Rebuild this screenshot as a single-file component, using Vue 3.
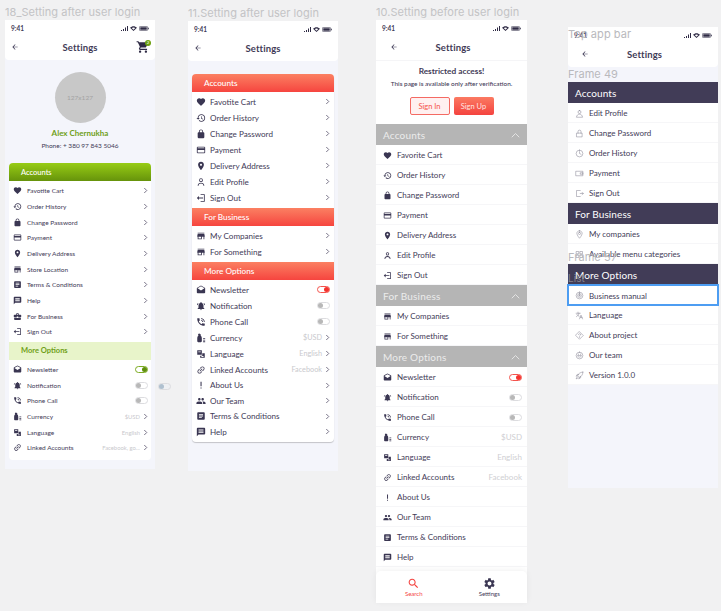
<script setup>
const icons = {
  heart: 'M12 21.35l-1.45-1.32C5.4 15.36 2 12.28 2 8.5 2 5.42 4.42 3 7.5 3c1.74 0 3.41.81 4.5 2.09C13.09 3.81 14.76 3 16.5 3 19.58 3 22 5.42 22 8.5c0 3.78-3.4 6.86-8.55 11.54L12 21.35z',
  history: 'M13 3c-4.97 0-9 4.03-9 9H1l3.89 3.89.07.14L9 12H6c0-3.87 3.13-7 7-7s7 3.13 7 7-3.13 7-7 7c-1.93 0-3.68-.79-4.94-2.06l-1.42 1.42C8.27 19.99 10.51 21 13 21c4.97 0 9-4.03 9-9s-4.03-9-9-9zm-1 5v5l4.28 2.54.72-1.21-3.5-2.08V8H12z',
  lock: 'M18 8h-1V6c0-2.76-2.24-5-5-5S7 3.24 7 6v2H6c-1.1 0-2 .9-2 2v10c0 1.1.9 2 2 2h12c1.1 0 2-.9 2-2V10c0-1.1-.9-2-2-2zM9 6c0-1.66 1.34-3 3-3s3 1.34 3 3v2H9V6z',
  card: 'M20 4H4c-1.11 0-1.99.89-1.99 2L2 18c0 1.11.89 2 2 2h16c1.11 0 2-.89 2-2V6c0-1.11-.89-2-2-2zm0 14H4v-6h16v6zm0-10H4V6h16v2z',
  place: 'M12 2C8.13 2 5 5.13 5 9c0 5.25 7 13 7 13s7-7.75 7-13c0-3.87-3.13-7-7-7zm0 9.5c-1.38 0-2.5-1.12-2.5-2.5s1.12-2.5 2.5-2.5 2.5 1.12 2.5 2.5-1.12 2.5-2.5 2.5z',
  store: 'M20 4H4v2h16V4zm1 10v-2l-1-5H4l-1 5v2h1v6h10v-6h4v6h2v-6h1zm-9 4H6v-4h6v4z',
  terms: 'M19 3H5c-1.1 0-2 .9-2 2v14c0 1.1.9 2 2 2h14c1.1 0 2-.9 2-2V5c0-1.1-.9-2-2-2zm-5 14H7v-2h7v2zm3-4H7v-2h10v2zm0-4H7V7h10v2z',
  help: 'M20 2H4c-1.1 0-2 .9-2 2v18l4-4h14c1.1 0 2-.9 2-2V4c0-1.1-.9-2-2-2zm-2 12H6v-2h12v2zm0-3H6V9h12v2zm0-3H6V6h12v2z',
  business: 'M10 16v-1H3.01L3 19c0 1.11.89 2 2 2h14c1.11 0 2-.89 2-2v-4h-7v1h-4zm10-9h-4.01V5l-2-2h-4l-2 2v2H4c-1.1 0-2 .9-2 2v3c0 1.11.89 2 2 2h6v-2h4v2h6c1.1 0 2-.9 2-2V9c0-1.1-.9-2-2-2zm-6 0h-4V5h4v2z',
  signout: 'M11 3h10v18H11v-2h8V5h-8V3zM2 12l5-5v4h10v2H7v4l-5-5z',
  mail: 'M21.99 8c0-.72-.37-1.35-.94-1.7L12 1 2.95 6.3C2.38 6.65 2 7.28 2 8v10c0 1.1.9 2 2 2h16c1.1 0 2-.9 2-2l-.01-10zM12 13L3.74 7.84 12 3l8.26 4.84L12 13z',
  bell: 'M12 22c1.1 0 2-.9 2-2h-4c0 1.1.9 2 2 2zm6-6v-5c0-3.07-1.63-5.64-4.5-6.32V4c0-.83-.67-1.5-1.5-1.5s-1.5.67-1.5 1.5v.68C7.64 5.36 6 7.92 6 11v5l-2 2v1h16v-1l-2-2zM2 9l2.5-4 1.4.9L3.4 10 2 9zm20 0l-1.4 1-2.5-4.1 1.4-.9L22 9z',
  phone: 'M20 15.5c-1.25 0-2.45-.2-3.57-.57-.35-.11-.74-.03-1.02.24l-2.2 2.2c-2.83-1.44-5.15-3.75-6.59-6.59l2.2-2.21c.28-.26.36-.65.25-1C8.7 6.45 8.5 5.25 8.5 4c0-.55-.45-1-1-1H4c-.55 0-1 .45-1 1 0 9.39 7.61 17 17 17 .55 0 1-.45 1-1v-3.5c0-.55-.45-1-1-1zM19 12h2c0-4.97-4.03-9-9-9v2c3.87 0 7 3.13 7 7zm-4 0h2c0-2.76-2.24-5-5-5v2c1.66 0 3 1.34 3 3z',
  currency: 'M9 2a2.5 2.5 0 0 1 2 4c2 1 3 4 3 7v7c0 1-1 2-2 2H5c-1 0-2-1-2-2v-7c0-3 1-6 3-7a2.5 2.5 0 0 1 3-4zM17 12h5v2h-5v-2zm0 4h5v2h-5v-2zm0 4h5v2h-5v-2z',
  language: 'M3 3h11v11H3V3zm2.5 3v2h6V6h-6zM15 10h6v11H10v-5h5v-6zm-2 8v1h5v-2h-5v1z',
  link: 'M3.9 12c0-1.71 1.39-3.1 3.1-3.1h4V7H7c-2.76 0-5 2.24-5 5s2.24 5 5 5h4v-1.9H7c-1.71 0-3.1-1.39-3.1-3.1zM8 13h8v-2H8v2zm9-6h-4v1.9h4c1.71 0 3.1 1.39 3.1 3.1s-1.39 3.1-3.1 3.1h-4V17h4c2.76 0 5-2.24 5-5s-2.24-5-5-5z',
  about: 'M10.8 4h2.6v11h-2.6zM10.8 18h2.6v2.6h-2.6z',
  team: 'M16 11c1.66 0 2.99-1.34 2.99-3S17.66 5 16 5c-1.66 0-3 1.34-3 3s1.34 3 3 3zm-8 0c1.66 0 2.99-1.34 2.99-3S9.66 5 8 5C6.34 5 5 6.34 5 8s1.34 3 3 3zm0 2c-2.33 0-7 1.17-7 3.5V19h14v-2.5c0-2.33-4.67-3.5-7-3.5zm8 0c-.29 0-.62.02-.97.05 1.16.84 1.97 1.97 1.97 3.45V19h6v-2.5c0-2.33-4.67-3.5-7-3.5z',
  person: 'M12 3a4.5 4.5 0 1 1 0 9 4.5 4.5 0 0 1 0-9zM4 21c0-5 3.5-7.5 8-7.5s8 2.500 8 7.500h-2.200c0-3.500-2.500-5.300-5.800-5.300S6.200 17.500 6.200 21H4zm8-16a2.500 2.500 0 1 0 0 5 2.500 2.500 0 0 0 0-5z',
  search: 'M15.5 14h-.79l-.28-.27C15.41 12.59 16 11.11 16 9.5 16 5.91 13.09 3 9.5 3S3 5.91 3 9.5 5.91 16 9.5 16c1.61 0 3.09-.59 4.23-1.57l.27.28v.79l5 4.99L20.49 19l-4.99-5zm-6 0C7.01 14 5 11.99 5 9.5S7.01 5 9.5 5 14 7.01 14 9.5 11.99 14 9.5 14z',
  gear: 'M19.14 12.94c.04-.3.06-.61.06-.94 0-.32-.02-.64-.07-.94l2.03-1.58c.18-.14.23-.41.12-.61l-1.92-3.32c-.12-.22-.37-.29-.59-.22l-2.39.96c-.5-.38-1.03-.7-1.62-.94l-.36-2.54c-.04-.24-.24-.41-.48-.41h-3.84c-.24 0-.43.17-.47.41l-.36 2.54c-.59.24-1.13.57-1.62.94l-2.39-.96c-.22-.08-.47 0-.59.22L2.74 8.87c-.12.21-.08.47.12.61l2.03 1.58c-.05.3-.09.63-.09.94s.02.64.07.94l-2.03 1.58c-.18.14-.23.41-.12.61l1.92 3.32c.12.22.37.29.59.22l2.39-.96c.5.38 1.03.7 1.62.94l.36 2.54c.05.24.24.41.48.41h3.84c.24 0 .44-.17.47-.41l.36-2.54c.59-.24 1.13-.56 1.62-.94l2.39.96c.22.08.47 0 .59-.22l1.92-3.32c.12-.22.07-.47-.12-.61l-2.01-1.58zM12 15.6c-1.98 0-3.6-1.62-3.6-3.6s1.62-3.6 3.6-3.6 3.6 1.62 3.6 3.6-1.62 3.6-3.6 3.6z',
  cart: 'M7 18c-1.1 0-1.99.9-1.99 2S5.9 22 7 22s2-.9 2-2-.9-2-2-2zM1 2v2h2l3.6 7.59-1.35 2.45c-.16.28-.25.61-.25.96 0 1.1.9 2 2 2h12v-2H7.42c-.14 0-.25-.11-.25-.25l.03-.12.9-1.63h7.45c.75 0 1.41-.41 1.75-1.03l3.58-6.49c.08-.14.12-.31.12-.48 0-.55-.45-1-1-1H5.21l-.94-2H1zm16 16c-1.1 0-1.99.9-1.99 2s.89 2 1.99 2 2-.9 2-2-.9-2-2-2z'
}

// thin outline set used by the last frame
const lines = {
  person: 'M12 4a4 4 0 1 1 0 8 4 4 0 0 1 0-8zM4 21c1-5 4-7 8-7s7 2 8 7z',
  lock: 'M5 11h14v10H5zM8 11V7a4 4 0 0 1 8 0v4',
  clock: 'M12 3a9 9 0 1 1 0 18 9 9 0 0 1 0-18zM12 7v5l4 2',
  wallet: 'M3 6h18v12H3zM15 10h6v4h-6z',
  exit: 'M14 4H4v16h10M14 12h8M19 9l3 3-3 3',
  pin: 'M12 2c4 0 7 3 7 7 0 5-7 13-7 13S5 14 5 9c0-4 3-7 7-7zM12 6a3 3 0 1 1 0 6 3 3 0 0 1 0-6z',
  grid: 'M4 4h6v6H4zM14 4h6v6h-6zM4 14h6v6H4zM14 14h6v6h-6z',
  target: 'M12 3a9 9 0 1 1 0 18 9 9 0 0 1 0-18zM12 7a5 5 0 1 1 0 10 5 5 0 0 1 0-10zM12 10.500a1.500 1.500 0 1 1 0 3 1.500 1.500 0 0 1 0-3z',
  translate: 'M3 6h11M8 3v3M11 6c-1 4-3 7-7 9M5 9c1 2 3 4 6 5M12 21l4-10 4 10M14 17h5',
  diamond: 'M12 2l10 10-10 10L2 12zM9 9.500c.5-3 6-3 6 0 0 2-3 2-3 4M12 16v1',
  smile: 'M12 3a9 9 0 1 1 0 18 9 9 0 0 1 0-18zM7 13c1 5 9 5 10 0zM9 8v2M15 8v2',
  rocket: 'M21 3c-7 0-12 4-14 10l4 4c6-2 10-7 10-14zM7 13l-4 1 3-5h4M11 17l-1 4 5-3v-4M5 17l-2 4 4-2'
}

const row = (icon, label, extra = {}) => ({ icon, label, arrow: true, ...extra })
const off = { toggle: 'off', arrow: false }
const on = { toggle: 'on', arrow: false }

const frames = [
  {
    id: 'f1', label: '18_Setting after user login', profile: true, cart: true, arrows: true,
    sections: [
      {
        title: 'Accounts',
        rows: [
          row('heart', 'Favotite Cart'), row('history', 'Order History'), row('lock', 'Change Password'),
          row('card', 'Payment'), row('place', 'Delivery Address'), row('store', 'Store Location'),
          row('terms', 'Terms & Conditions'), row('help', 'Help'), row('business', 'For Business'),
          row('signout', 'Sign Out')
        ]
      },
      {
        title: 'More Options', soft: true,
        rows: [
          row('mail', 'Newsletter', on), row('bell', 'Notification', off), row('phone', 'Phone Call', off),
          row('currency', 'Currency', { value: '$USD' }), row('language', 'Language', { value: 'English' }),
          row('link', 'Linked Accounts', { value: 'Facebook, go...' })
        ]
      }
    ]
  },
  {
    id: 'f2', label: '11.Setting after user login', arrows: true,
    sections: [
      {
        title: 'Accounts',
        rows: [
          row('heart', 'Favotite Cart'), row('history', 'Order History'), row('lock', 'Change Password'),
          row('card', 'Payment'), row('place', 'Delivery Address'), row('person', 'Edit Profile'),
          row('signout', 'Sign Out')
        ]
      },
      { title: 'For Business', rows: [row('store', 'My Companies'), row('store', 'For Something')] },
      {
        title: 'More Options',
        rows: [
          row('mail', 'Newsletter', on), row('bell', 'Notification', off), row('phone', 'Phone Call', off),
          row('currency', 'Currency', { value: '$USD' }), row('language', 'Language', { value: 'English' }),
          row('link', 'Linked Accounts', { value: 'Facebook' }), row('about', 'About Us', { tight: true }),
          row('team', 'Our Team', { tight: true }), row('terms', 'Terms & Conditions', { tight: true }),
          row('help', 'Help', { tight: true })
        ]
      }
    ]
  },
  {
    id: 'f3', label: '10.Setting before user login', restricted: true, tabs: true, chevrons: true,
    sections: [
      {
        title: 'Accounts',
        rows: [
          row('heart', 'Favorite Cart'), row('history', 'Order History'), row('lock', 'Change Password'),
          row('card', 'Payment'), row('place', 'Delivery Address'), row('person', 'Edit Profile'),
          row('signout', 'Sign Out')
        ]
      },
      { title: 'For Business', rows: [row('store', 'My Companies'), row('store', 'For Something')] },
      {
        title: 'More Options',
        rows: [
          row('mail', 'Newsletter', on), row('bell', 'Notification', off), row('phone', 'Phone Call', off),
          row('currency', 'Currency', { value: '$USD' }), row('language', 'Language', { value: 'English' }),
          row('link', 'Linked Accounts', { value: 'Facebook' }), row('about', 'About Us'), row('team', 'Our Team'),
          row('terms', 'Terms & Conditions'), row('help', 'Help')
        ]
      }
    ]
  },
  {
    id: 'f4', label: '', outline: true,
    sections: [
      {
        title: 'Accounts',
        rows: [
          row('person', 'Edit Profile'), row('lock', 'Change Password'), row('clock', 'Order History'),
          row('wallet', 'Payment'), row('exit', 'Sign Out')
        ]
      },
      { title: 'For Business', rows: [row('pin', 'My companies'), row('grid', 'Available menu categories')] },
      {
        title: 'More Options',
        rows: [
          row('target', 'Business manual', { focus: true }), row('translate', 'Language'), row('diamond', 'About project'),
          row('smile', 'Our team'), row('rocket', 'Version 1.0.0')
        ]
      }
    ]
  }
]
</script>

<template>
  <div class="canvas">
    <template v-for="frame in frames" :key="frame.id">
      <div v-if="frame.label" class="frame-label" :class="`label-${frame.id}`">{{ frame.label }}</div>

      <section class="phone" :class="frame.id">
        <header class="top">
          <div class="status">
            <span>9:41</span>
            <span class="status-icons">
              <svg width="7" height="5" viewBox="0 0 7 5"><path d="M0 4h1v1H0zM2 3h1v2H2zM4 1.500h1V5H4zM6 0h1v5H6z" /></svg>
              <svg width="7" height="5" viewBox="0 0 14 10"><path d="M7 10L0 3.500C4-.8 10-.8 14 3.500zM7 7.500l3.500-3.400C8.500 2.300 5.500 2.300 3.500 4.100z" /></svg>
              <svg class="battery" width="10" height="5" viewBox="0 0 20 10"><rect x=".8" y=".8" width="16.400" height="8.400" rx="2" fill="none" stroke="#2f2b45" stroke-width="1.200" /><rect x="2.500" y="2.500" width="13" height="5" /><rect x="18.300" y="3.500" width="1.500" height="3" /></svg>
            </span>
          </div>
          <div class="nav">
            <svg class="back" width="8" height="8" viewBox="0 0 24 24"><path d="M20 11H7.800l5.600-5.600L12 4l-8 8 8 8 1.400-1.400L7.800 13H20z" /></svg>
            <span class="nav-title">Settings</span>
            <span v-if="frame.cart" class="cart">
              <svg width="14" height="14" viewBox="0 0 24 24"><path :d="icons.cart" /></svg>
              <i>2</i>
            </span>
          </div>
        </header>

        <div v-if="frame.profile" class="profile">
          <div class="avatar">127x127</div>
          <div class="profile-name">Alex Chernukha</div>
          <div class="profile-phone">Phone: + 380 97 843 5046</div>
        </div>

        <div v-if="frame.restricted" class="restricted">
          <div class="restricted-title">Restricted access!</div>
          <div class="restricted-text">This page is available only after verification.</div>
          <div class="restricted-actions">
            <span class="btn btn--ghost">Sign In</span>
            <span class="btn btn--solid">Sign Up</span>
          </div>
        </div>

        <div class="card">
          <div v-for="section in frame.sections" :key="section.title" class="section">
            <div class="section-head" :class="{ 'section-head--soft': section.soft }">
              <span>{{ section.title }}</span>
              <svg v-if="frame.chevrons" width="9" height="6" viewBox="0 0 12 8"><path d="M1 7l5-5 5 5" fill="none" stroke="#e4e4e4" stroke-width="1.300" /></svg>
            </div>
            <div
              v-for="item in section.rows"
              :key="item.label"
              class="row"
              :class="{ 'row--focus': item.focus, 'row--tight': item.tight }"
            >
              <svg v-if="frame.outline" class="icon icon--line" viewBox="0 0 24 24"><path :d="lines[item.icon]" /></svg>
              <svg v-else class="icon" :class="{ 'icon--tilt': item.icon === 'link' }" viewBox="0 0 24 24"><path :d="icons[item.icon]" /></svg>
              <span class="row-label">{{ item.label }}</span>
              <span v-if="item.value" class="row-value">{{ item.value }}</span>
              <span v-if="item.toggle" class="toggle" :class="`toggle--${item.toggle}`"><i></i></span>
              <svg v-if="item.arrow && frame.arrows" class="arrow" viewBox="0 0 8 10"><path d="M2 1l4 4-4 4" /></svg>
            </div>
          </div>
        </div>

        <footer v-if="frame.tabs" class="tabs">
          <div class="tab tab--active">
            <svg width="13" height="13" viewBox="0 0 24 24"><path :d="icons.search" /></svg>
            <span>Search</span>
          </div>
          <div class="tab">
            <svg width="13" height="13" viewBox="0 0 24 24"><path :d="icons.gear" /></svg>
            <span>Settings</span>
          </div>
        </footer>
      </section>
    </template>

    <span class="toggle toggle--stray"><i></i></span>
    <div class="frame-label over over-top">Top app bar</div>
    <div class="frame-label over over-frame49">Frame 49</div>
    <div class="frame-label over over-frame57">Frame 57</div>
    <div class="frame-label over over-list">List</div>
  </div>
</template>

<style>
html,
body {
  margin: 0;
  background: #f1f1f2;
}
</style>

<style scoped>
.canvas {
  position: relative;
  width: 721px;
  height: 611px;
  overflow: hidden;
  background: #f1f1f2;
  font-family: Lato, "Liberation Sans", sans-serif;
  color: #3f3b57;
}

.frame-label {
  position: absolute;
  font-family: Inter, "Liberation Sans", sans-serif;
  font-size: 11px;
  line-height: 14px;
  letter-spacing: .05px;
  color: #c3c3c5;
  white-space: nowrap;
}

.label-f1 { left: 5px; top: 5px; }
.label-f2 { left: 188px; top: 6px; }
.label-f3 { left: 376px; top: 5px; }

.over { z-index: 3; color: #b9b9bd; }
.over-top { left: 568px; top: 27px; }
.over-frame49 { left: 568px; top: 67px; }
.over-frame57 { left: 568px; top: 250px; }
.over-list { left: 568px; top: 271px; font-size: 10px; color: #85838f; }

.phone {
  position: absolute;
  width: 150px;
  display: flex;
  flex-direction: column;
  background: #f4f5fb;
}

.f1 { left: 5px; top: 20px; height: 449px; }
.f2 { left: 188px; top: 21px; height: 450px; }
.f3 { left: 376px; top: 20px; width: 151px; height: 583px; background: #fff; }
.f4 { left: 568px; top: 27px; height: 461px; }

.top {
  background: #fff;
  border-radius: 0 0 4px 4px;
}

.status {
  height: 15px;
  box-sizing: border-box;
  display: flex;
  align-items: center;
  justify-content: space-between;
  padding: 1px 6px 0;
  font-size: 6.500px;
  font-weight: 700;
}

.status-icons {
  display: flex;
  align-items: center;
  gap: 2px;
}

.status-icons svg {
  fill: #2f2b45;
}

.nav {
  position: relative;
  height: 25px;
  display: flex;
  align-items: center;
  justify-content: center;
}

.f3 .nav,
.f4 .nav { padding-left: 3px; }

.nav-title {
  font-size: 9.500px;
  font-weight: 700;
  letter-spacing: .1px;
}

.back {
  position: absolute;
  left: 6px;
  top: 8px;
  fill: #3f3b57;
}

.f3 .back { left: 14px; }
.f4 .back { left: 13px; }

.cart {
  position: absolute;
  right: 5px;
  top: 5px;
  line-height: 0;
}

.cart svg { fill: #2f2b45; }

.cart i {
  position: absolute;
  right: -1px;
  top: 0;
  width: 6px;
  height: 6px;
  border-radius: 50%;
  background: #6c9f0f;
  color: #fff;
  font-size: 4.500px;
  font-style: normal;
  line-height: 6px;
  text-align: center;
}

.profile {
  height: 103px;
  display: flex;
  flex-direction: column;
  align-items: center;
  padding-top: 12px;
  box-sizing: border-box;
}

.avatar {
  width: 51px;
  height: 51px;
  flex: none;
  border-radius: 50%;
  background: #c8c8c8;
  color: #a3a3a3;
  display: flex;
  align-items: center;
  justify-content: center;
  font-size: 6.500px;
}

.profile-name {
  margin-top: 4px;
  font-size: 8px;
  line-height: 12px;
  font-weight: 700;
  color: #6f9f17;
}

.profile-phone {
  margin-top: 1px;
  font-size: 6.500px;
  line-height: 11px;
}

.restricted {
  height: 64px;
  box-sizing: border-box;
  border-top: 1px solid #f5f5f7;
  display: flex;
  flex-direction: column;
  align-items: center;
  padding-top: 4px;
}

.restricted-title {
  font-size: 8.300px;
  line-height: 13px;
  font-weight: 700;
}

.restricted-text {
  font-size: 6.400px;
  line-height: 12px;
  font-weight: 500;
}

.restricted-actions {
  display: flex;
  gap: 4px;
  margin-top: 7px;
}

.btn {
  width: 40px;
  height: 18px;
  box-sizing: border-box;
  border-radius: 2px;
  display: flex;
  align-items: center;
  justify-content: center;
  font-size: 7.500px;
}

.btn--ghost {
  background: #fff0f0;
  border: 1px solid #f46a63;
  color: #f4534c;
}

.btn--solid {
  background: linear-gradient(180deg, #fb7a62, #f4433f);
  color: #ffe5e0;
}

.card {
  background: #fff;
}

.f1 .card {
  margin: 0 4px;
  border-radius: 4px;
  overflow: hidden;
  height: 297px;
}

.f2 .card {
  margin: 12.500px 4px 0;
  padding-bottom: 2.500px;
  border-radius: 4px;
  overflow: hidden;
  box-shadow: 0 1px 1px rgba(0, 0, 0, .2);
}

.f4 .card {
  margin-top: 15px;
}

.section-head {
  display: flex;
  align-items: center;
  justify-content: space-between;
  box-sizing: border-box;
  color: #fff;
}

.f1 .section-head {
  height: 18px;
  margin-bottom: 2px;
  padding-left: 12px;
  font-size: 7.500px;
  font-weight: 500;
  background: linear-gradient(180deg, #97cc15, #66930b);
}

.f1 .section-head--soft {
  margin-top: 2px;
  background: #e8f4ca;
  color: #6f9f17;
  font-weight: 700;
}

.f2 .section-head {
  height: 18px;
  margin-bottom: 2px;
  padding-left: 12px;
  font-size: 8.200px;
  font-weight: 500;
  background: linear-gradient(180deg, #fb8062, #f6453f);
}

.f2 .section + .section .section-head { margin-top: 2px; }

.f3 .section-head {
  height: 21px;
  padding: 0 7px;
  font-size: 10px;
  letter-spacing: .2px;
  background: #b5b5b5;
  color: #ececec;
}

.f4 .section-head {
  height: 21px;
  padding: 0 7px;
  font-size: 10px;
  letter-spacing: .1px;
  background: #413c57;
}

.row {
  display: flex;
  align-items: center;
  box-sizing: border-box;
}

.f1 .row {
  height: 15.670px;
  padding: 0 3px 0 4px;
  font-size: 6.500px;
}

.f2 .row {
  height: 16px;
  padding: 0 4px;
  font-size: 8.100px;
}

.f2 .row--tight { height: 15.500px; }

.f3 .row,
.f4 .row {
  height: 20px;
  padding: 1px 5px 0 7px;
  font-size: 8px;
  border-bottom: 1px solid #f6f6f8;
}

.row--focus {
  position: relative;
  z-index: 2;
  margin: -1px -1px -1px;
  padding-left: 6px !important;
  border: 2px solid #4d9df2 !important;
  height: 22px !important;
}

.icon {
  width: 9px;
  height: 9px;
  flex: none;
  fill: #3a3652;
  margin-right: 5px;
}

.f2 .icon { width: 10px; height: 10px; margin-right: 4px; }
.f3 .icon { width: 9px; height: 9px; margin-right: 5px; }

.icon--tilt { transform: rotate(-45deg); }

.icon--line {
  fill: none;
  stroke: #7c7a8a;
  stroke-width: 1.300;
  stroke-linejoin: round;
  stroke-linecap: round;
}

.row-label {
  flex: 1;
  white-space: nowrap;
}

.row-value {
  color: #c9c9cd;
  font-size: .9em;
  margin-right: 3px;
}

.f3 .row-value { color: #cfcfd3; font-size: 1em; margin-right: 0; }

.arrow {
  width: 5px;
  height: 7px;
  flex: none;
  fill: none;
  stroke: #4b4760;
  stroke-width: 1.200;
}

.toggle {
  width: 13px;
  height: 7px;
  box-sizing: border-box;
  border: 1px solid #dcdcdf;
  border-radius: 4px;
  background: #fff;
  display: flex;
  align-items: center;
  padding: 0;
  flex: none;
}

.toggle i {
  width: 5px;
  height: 5px;
  border-radius: 50%;
  background: #b8b8b8;
}

.toggle--on { justify-content: flex-end; }

.f1 .toggle--on { border-color: #7dac22; }
.f1 .toggle--on i { background: #5f8f0c; }
.f2 .toggle--on,
.f3 .toggle--on { border-color: #f4534c; }
.f2 .toggle--on i,
.f3 .toggle--on i { background: #f4332e; }

.toggle--stray {
  position: absolute;
  left: 158px;
  top: 383px;
  background: #eef0f3;
}

.toggle--stray i { background: #afc0cf; }

.tabs {
  position: absolute;
  left: 0;
  right: 0;
  bottom: 0;
  height: 32px;
  display: flex;
  background: #fff;
  border-radius: 5px 5px 0 0;
  box-shadow: 0 -1px 6px rgba(0, 0, 0, .06);
}

.tab {
  flex: 1;
  display: flex;
  flex-direction: column;
  align-items: center;
  justify-content: center;
  font-size: 6px;
  line-height: 7px;
}

.tab svg { fill: #3a3652; }
.tab--active { color: #f4433f; }
.tab--active svg { fill: #f4433f; }
</style>
